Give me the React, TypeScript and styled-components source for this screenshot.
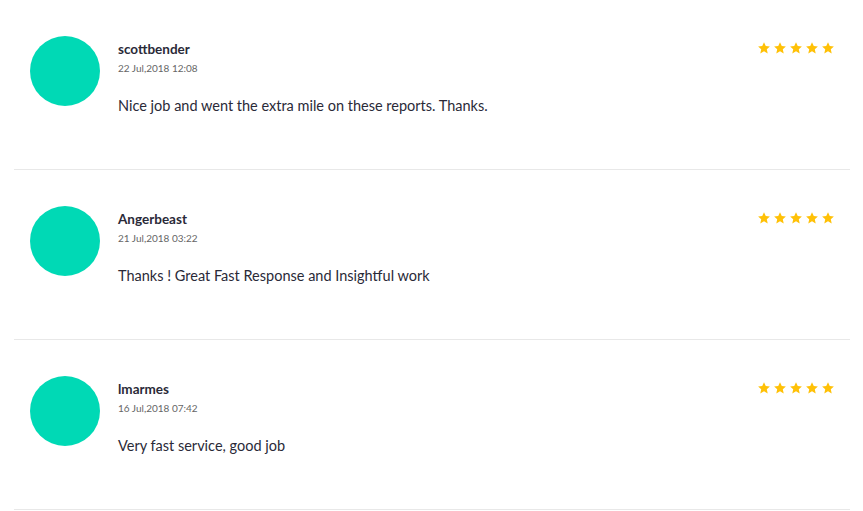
import React from "react";
import styled, { createGlobalStyle } from "styled-components";

const Global = createGlobalStyle`
  html, body { margin: 0; padding: 0; background: #fff; }
  body { font-family: Lato, "Noto Sans", sans-serif; }
`;

const List = styled.div`
  padding: 0 13px 0 14px;
`;

const Row = styled.div`
  display: flex;
  align-items: flex-start;
  box-sizing: border-box;
  height: 170px;
  padding: 36px 16px 0 16px;
  border-bottom: 1px solid #e8e8e8;
`;

const Avatar = styled.div`
  width: 70px;
  height: 70px;
  border-radius: 50%;
  background: #00d9b5;
  flex-shrink: 0;
`;

const Body = styled.div`
  flex: 1;
  margin-left: 18px;
  padding-top: 5px;
`;

const Name = styled.div`
  font-size: 13.5px;
  font-weight: 700;
  color: #2a2a38;
  line-height: 16px;
`;

const Date = styled.div`
  margin-top: 5px;
  font-size: 10px;
  color: #666;
  line-height: 12px;
`;

const Message = styled.div`
  margin-top: 23px;
  font-size: 14.5px;
  color: #2a2a38;
  line-height: 18px;
`;

const Stars = styled.div`
  display: flex;
  gap: 4px;
  padding-top: 6px;
`;

const Star = () => (
  <svg width="12" height="12" viewBox="0 0 24 24">
    <path
      fill="#ffc107"
      d="M12 0.5l3.5 7.6 8.3.9-6.2 5.6 1.8 8.2L12 18.6l-7.4 4.2 1.8-8.2L.2 9l8.3-.9z"
    />
  </svg>
);

const reviews = [
  { name: "scottbender", date: "22 Jul,2018 12:08", text: "Nice job and went the extra mile on these reports. Thanks." },
  { name: "Angerbeast", date: "21 Jul,2018 03:22", text: "Thanks ! Great Fast Response and Insightful work" },
  { name: "lmarmes", date: "16 Jul,2018 07:42", text: "Very fast service, good job" },
];

export default function App() {
  return (
    <>
      <Global />
      <List>
        {reviews.map((r) => (
          <Row key={r.name}>
            <Avatar />
            <Body>
              <Name>{r.name}</Name>
              <Date>{r.date}</Date>
              <Message>{r.text}</Message>
            </Body>
            <Stars>
              {[0, 1, 2, 3, 4].map((i) => (
                <Star key={i} />
              ))}
            </Stars>
          </Row>
        ))}
      </List>
    </>
  );
}
